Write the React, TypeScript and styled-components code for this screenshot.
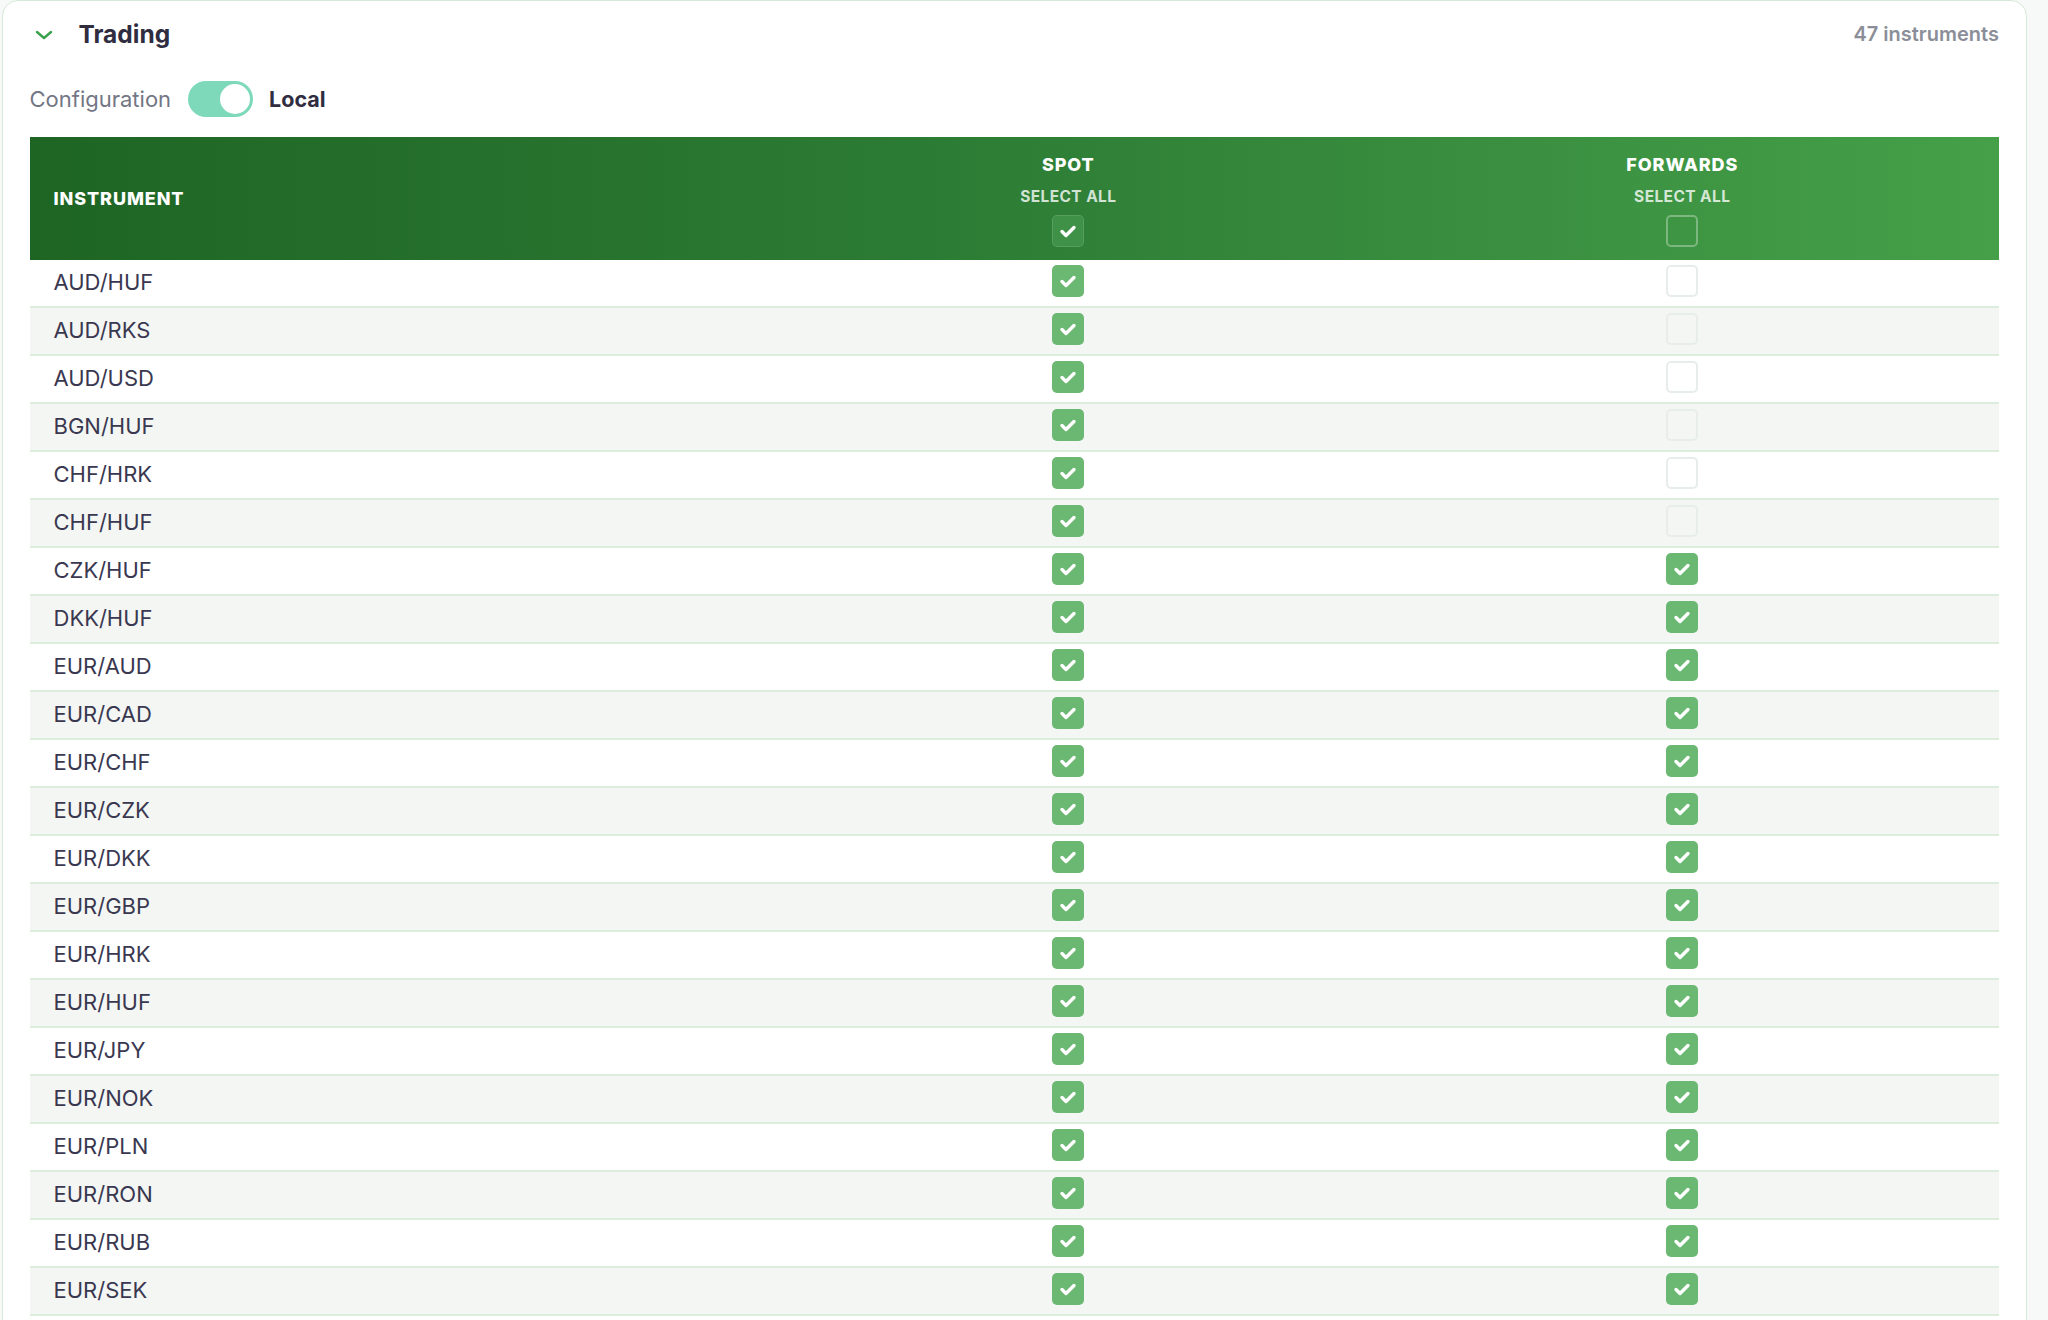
import React from "react";
import styled, { createGlobalStyle } from "styled-components";

const GlobalStyle = createGlobalStyle`
	html, body {
		margin: 0;
		padding: 0;
		background: #f6f9f7;
		font-family: Inter, "Noto Sans", sans-serif;
		-webkit-font-smoothing: antialiased;
	}
	* {
		box-sizing: border-box;
	}
`;

const INSTRUMENTS = [
	"AUD/HUF", "AUD/RKS", "AUD/USD", "BGN/HUF", "CHF/HRK", "CHF/HUF", "CZK/HUF", "DKK/HUF",
	"EUR/AUD", "EUR/CAD", "EUR/CHF", "EUR/CZK", "EUR/DKK", "EUR/GBP", "EUR/HRK", "EUR/HUF",
	"EUR/JPY", "EUR/NOK", "EUR/PLN", "EUR/RON", "EUR/RUB", "EUR/SEK", "EUR/TRY", "EUR/USD",
	"GBP/HUF", "GBP/USD", "HRK/HUF", "JPY/HUF", "NOK/HUF", "PLN/HUF", "RON/HUF", "RSD/HUF",
	"RUB/HUF", "SEK/HUF", "TRY/HUF", "USD/CAD", "USD/CHF", "USD/CZK", "USD/HUF", "USD/JPY",
	"USD/NOK", "USD/PLN", "USD/RON", "USD/RUB", "USD/SEK", "USD/TRY", "XAU/USD",
];

const ROWS = INSTRUMENTS.map((name, i) => ({ name, spot: true, forwards: i >= 6 }));

function CheckMark() {
	return (
		<svg width="24" height="24" viewBox="0 0 24 24" fill="none">
			<path d="M6 12.5l4 4 8-8" stroke="#fff" strokeWidth="3.4" strokeLinecap="round" strokeLinejoin="round" />
		</svg>
	);
}

function Chevron() {
	return (
		<svg width="18" height="10" viewBox="0 0 18 10" fill="none">
			<path d="M2 2l7 6 7-6" stroke="#3aa24a" strokeWidth="2.4" strokeLinecap="round" strokeLinejoin="round" />
		</svg>
	);
}

export default function App() {
	return (
		<>
			<GlobalStyle />
			<Card>
				<TitleRow>
					<TitleLeft>
						<ChevronBox>
							<Chevron />
						</ChevronBox>
						<Title>Trading</Title>
					</TitleLeft>
					<Count>47 instruments</Count>
				</TitleRow>
				<ConfigRow>
					<ConfigLabel>Configuration</ConfigLabel>
					<Toggle>
						<Knob />
					</Toggle>
					<ConfigValue>Local</ConfigValue>
				</ConfigRow>
				<Table>
					<HeadRow>
						<HeadCell>INSTRUMENT</HeadCell>
						<HeadColumn>
							<HeadTitle>SPOT</HeadTitle>
							<SelectAll>SELECT ALL</SelectAll>
							<HeadBox $checked>
								<CheckMark />
							</HeadBox>
						</HeadColumn>
						<HeadColumn>
							<HeadTitle>FORWARDS</HeadTitle>
							<SelectAll>SELECT ALL</SelectAll>
							<HeadBox />
						</HeadColumn>
					</HeadRow>
					{ROWS.map((row, i) => (
						<Row key={row.name} $striped={i % 2 === 1}>
							<NameCell>{row.name}</NameCell>
							<BoxCell>
								<Box $checked={row.spot}>{row.spot && <CheckMark />}</Box>
							</BoxCell>
							<BoxCell>
								<Box $checked={row.forwards}>{row.forwards && <CheckMark />}</Box>
							</BoxCell>
						</Row>
					))}
				</Table>
			</Card>
		</>
	);
}

const Card = styled.div`
	margin-left: 2px;
	width: 2025px;
	background: #fff;
	border: 1.5px solid #d6e9d8;
	border-radius: 16px;
	padding: 12px 27px 40px 26.5px;
`;

const TitleRow = styled.div`
	display: flex;
	align-items: center;
	justify-content: space-between;
	height: 42px;
`;

const TitleLeft = styled.div`
	display: flex;
	align-items: center;
	gap: 26px;
`;

const ChevronBox = styled.span`
	display: flex;
	margin-left: 5px;
	margin-top: 2px;
`;

const Title = styled.h2`
	margin: 0;
	font-size: 24.5px;
	font-weight: 700;
	color: #2f2d3f;
`;

const Count = styled.span`
	font-size: 20px;
	font-weight: 600;
	color: #8b8e98;
`;

const ConfigRow = styled.div`
	display: flex;
	align-items: center;
	height: 36px;
	margin-top: 26px;
`;

const ConfigLabel = styled.span`
	font-size: 22px;
	color: #737684;
	margin-right: 17px;
`;

const Toggle = styled.div`
	width: 65px;
	height: 36px;
	border-radius: 18px;
	background: #7dd9b9;
	display: flex;
	align-items: center;
	justify-content: flex-end;
	padding-right: 3px;
	margin-right: 16px;
`;

const Knob = styled.span`
	width: 30px;
	height: 30px;
	border-radius: 50%;
	background: #fff;
`;

const ConfigValue = styled.span`
	font-size: 21.5px;
	font-weight: 700;
	color: #2f2d3f;
`;

const Table = styled.div`
	margin-top: 20px;
	display: flex;
	flex-direction: column;
`;

const grid = `
	display: grid;
	grid-template-columns: 741fr 594fr 633fr;
`;

const HeadRow = styled.div`
	${grid}
	height: 123px;
	background: linear-gradient(90deg, #1e6524 0%, #2c7b34 45%, #45a049 100%);
	align-items: center;
`;

const HeadCell = styled.div`
	padding-left: 24px;
	font-size: 18px;
	font-weight: 800;
	letter-spacing: 0.9px;
	color: #fff;
`;

const HeadColumn = styled.div`
	display: flex;
	flex-direction: column;
	align-items: center;
	padding-top: 4px;
`;

const HeadTitle = styled.span`
	font-size: 18px;
	font-weight: 800;
	letter-spacing: 0.9px;
	line-height: 20px;
	color: #fff;
`;

const SelectAll = styled.span`
	margin-top: 13px;
	font-size: 15.5px;
	font-weight: 700;
	letter-spacing: 0.4px;
	line-height: 18px;
	color: rgba(255, 255, 255, 0.78);
`;

const HeadBox = styled.span<{ $checked?: boolean }>`
	margin-top: 9px;
	width: 32px;
	height: 32px;
	border-radius: 5px;
	display: flex;
	align-items: center;
	justify-content: center;
	background: ${({ $checked }) => ($checked ? "#3e9146" : "transparent")};
	border: ${({ $checked }) => ($checked ? "1px solid rgba(255,255,255,0.12)" : "2px solid rgba(255,255,255,0.32)")};
`;

const Row = styled.div<{ $striped: boolean }>`
	${grid}
	height: 48px;
	align-items: center;
	background: ${({ $striped }) => ($striped ? "#f4f6f4" : "#fff")};
	border-bottom: 2px solid #dcecdd;
`;

const NameCell = styled.div`
	padding-left: 24px;
	font-size: 22px;
	color: #3a3850;
	padding-bottom: 2px;
`;

const BoxCell = styled.div`
	display: flex;
	justify-content: center;
	padding-bottom: 4px;
`;

const Box = styled.span<{ $checked: boolean }>`
	width: 32px;
	height: 32px;
	border-radius: 5px;
	display: flex;
	align-items: center;
	justify-content: center;
	background: ${({ $checked }) => ($checked ? "#6bb872" : "transparent")};
	border: ${({ $checked }) => ($checked ? "none" : "2px solid #e7ede8")};
`;
